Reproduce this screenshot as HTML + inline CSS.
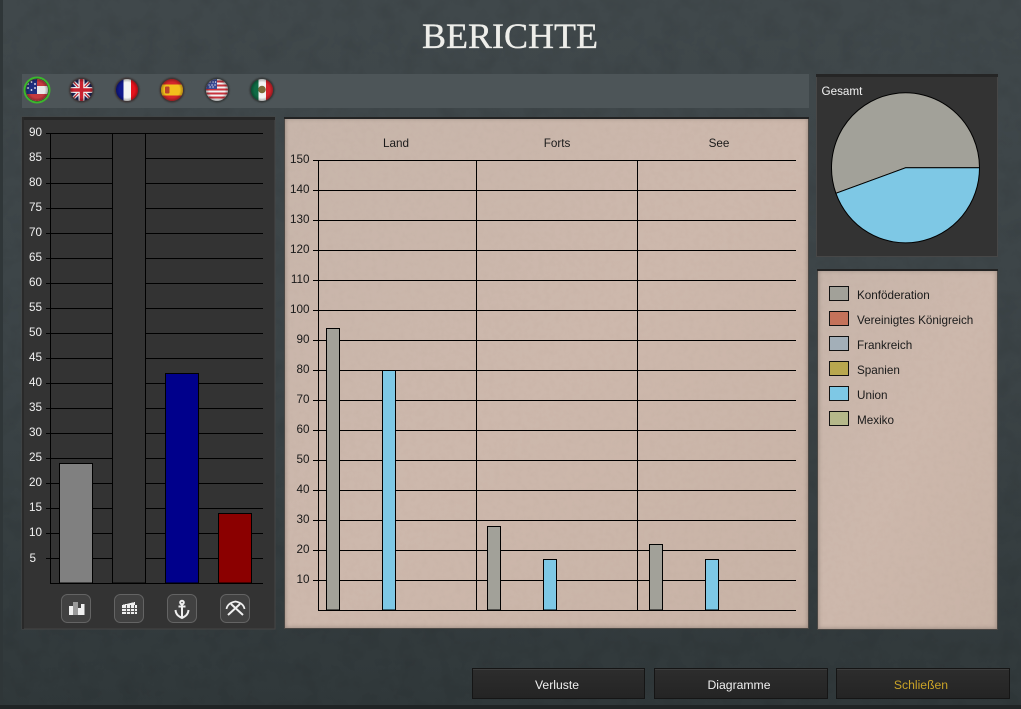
<!DOCTYPE html>
<html><head><meta charset="utf-8"><style>
html,body{margin:0;padding:0;background:#363d40}
body{width:1021px;height:709px;overflow:hidden;position:relative}
svg{position:absolute;left:0;top:0}
text{font-family:"Liberation Sans",sans-serif;font-size:11.7px}
</style></head><body>
<svg width="1021" height="709" viewBox="0 0 1021 709" xmlns="http://www.w3.org/2000/svg" shape-rendering="crispEdges">
<defs>
<linearGradient id="bg" x1="0" y1="0" x2="0" y2="1"><stop offset="0" stop-color="#40484b"/><stop offset=".5" stop-color="#3c4447"/><stop offset="1" stop-color="#30383a"/></linearGradient>
<linearGradient id="paper" x1="0" y1="0" x2="1" y2="1"><stop offset="0" stop-color="#c7b5aa"/><stop offset=".5" stop-color="#cdb8ac"/><stop offset="1" stop-color="#c8b3a6"/></linearGradient>
<linearGradient id="btn" x1="0" y1="0" x2="0" y2="1"><stop offset="0" stop-color="#2d2d2d"/><stop offset="1" stop-color="#242424"/></linearGradient>
<radialGradient id="shade"><stop offset=".7" stop-color="#000" stop-opacity="0"/><stop offset="1" stop-color="#000" stop-opacity=".3"/></radialGradient>
<filter id="noise" x="0" y="0" width="100%" height="100%"><feTurbulence type="fractalNoise" baseFrequency=".05" numOctaves="5" seed="4"/><feColorMatrix values="0 0 0 0 0 0 0 0 0 0 0 0 0 0 0 0 0 0 1.2 -.5"/></filter>
<filter id="grain" x="0" y="0" width="100%" height="100%"><feTurbulence type="fractalNoise" baseFrequency=".18" numOctaves="3" seed="9"/><feColorMatrix values="0 0 0 0 .35 0 0 0 0 .25 0 0 0 0 .2 0 0 0 1.2 -.5"/></filter>
<filter id="soft" x="-10%" y="-10%" width="120%" height="120%"><feGaussianBlur stdDeviation="2"/></filter>
<filter id="glow" x="-30%" y="-30%" width="160%" height="160%"><feGaussianBlur stdDeviation=".8"/></filter>
<clipPath id="c"><circle cx="0" cy="0" r="11"/></clipPath>
<clipPath id="midc"><rect x="284" y="117" width="525" height="512"/></clipPath>
<clipPath id="legc"><rect x="817" y="269" width="181" height="361"/></clipPath>
</defs>
<rect width="1021" height="709" fill="url(#bg)"/>
<rect width="1021" height="709" filter="url(#noise)" opacity=".1"/>
<rect x="0" y="0" width="3" height="709" fill="#2f3638"/>
<rect x="0" y="705" width="1021" height="4" fill="#202425"/>

<text x="510" y="48" text-anchor="middle" style="font-family:'Liberation Serif',serif;font-size:36px" fill="#eeeeea" stroke="#eeeeea" stroke-width=".35" shape-rendering="auto">BERICHTE</text>

<!-- Flag bar -->
<rect x="22" y="74" width="787" height="34" fill="#4d5558"/>
<g shape-rendering="geometricPrecision">
<circle cx="37" cy="90" r="12.500" fill="#2a2a2a" stroke="#3cb72c" stroke-width="2"/>
<g transform="translate(37 90)" clip-path="url(#c)"><rect x="-11" y="-11" width="22" height="22" fill="#e8e8e8"/><rect x="-11" y="-11" width="22" height="7" fill="#c43a3f"/><rect x="-11" y="4" width="22" height="7" fill="#c43a3f"/><rect x="-11" y="-11" width="11" height="15" fill="#1f2f7e"/><circle cx="-5.500" cy="-8" r=".9" fill="#fff"/><circle cx="-2" cy="-6" r=".9" fill="#fff"/><circle cx="-2" cy="-2" r=".9" fill="#fff"/><circle cx="-5.500" cy="0" r=".9" fill="#fff"/><circle cx="-9" cy="-2" r=".9" fill="#fff"/><circle cx="-9" cy="-6" r=".9" fill="#fff"/><circle r="11" fill="url(#shade)"/></g>

<circle cx="81.500" cy="90" r="12.500" fill="#3a3030" filter="url(#glow)"/>
<g transform="translate(81.500 90)" clip-path="url(#c)"><rect x="-11" y="-11" width="22" height="22" fill="#1d2358"/><path d="M-11-11L11 11M11-11L-11 11" stroke="#eee" stroke-width="3.500"/><path d="M-11-11L11 11M11-11L-11 11" stroke="#c8202f" stroke-width="1.200"/><path d="M0-11V11M-11 0H11" stroke="#eee" stroke-width="6"/><path d="M0-11V11M-11 0H11" stroke="#c8202f" stroke-width="3.500"/><circle r="11" fill="url(#shade)"/></g>

<circle cx="127" cy="90" r="12.500" fill="#3a3030" filter="url(#glow)"/>
<g transform="translate(127 90)" clip-path="url(#c)"><rect x="-11" y="-11" width="8" height="22" fill="#10188c"/><rect x="-3.500" y="-11" width="7.500" height="22" fill="#f3f3f3"/><rect x="4" y="-11" width="7" height="22" fill="#e6121c"/><circle r="11" fill="url(#shade)"/></g>

<circle cx="172" cy="90" r="12.500" fill="#3a3030" filter="url(#glow)"/>
<g transform="translate(172 90)" clip-path="url(#c)"><rect x="-11" y="-11" width="22" height="22" fill="#d4272b"/><rect x="-11" y="-5.500" width="22" height="11" fill="#f2c01c"/><rect x="-7" y="-3.500" width="4.500" height="7" rx="1" fill="#b9432c"/><circle r="11" fill="url(#shade)"/></g>

<circle cx="217" cy="90" r="12.500" fill="#303636" filter="url(#glow)"/>
<g transform="translate(217 90)" clip-path="url(#c)"><rect x="-11" y="-11" width="22" height="22" fill="#f2f2f2"/><path d="M-11-8.500H11M-11-4.500H11M-11-.5H11M-11 3.500H11M-11 7.500H11" stroke="#c8323c" stroke-width="2"/><rect x="-11" y="-11" width="11" height="10" fill="#3a4a94"/><path d="M-7-8h.1M-4-8h.1M-1.500-8h.1M-8-5h.1M-5-5h.1M-2-5h.1M-7-3h.1M-4-3h.1" stroke="#fff" stroke-width="1.200" stroke-linecap="round"/><circle r="11" fill="url(#shade)"/></g>

<circle cx="262" cy="90" r="12.500" fill="#303636" filter="url(#glow)"/>
<g transform="translate(262 90)" clip-path="url(#c)"><rect x="-11" y="-11" width="7.500" height="22" fill="#0f6b45"/><rect x="-3.500" y="-11" width="7.500" height="22" fill="#f3f3f3"/><rect x="4" y="-11" width="7" height="22" fill="#d4242c"/><circle cx="0" cy="-.5" r="3.800" fill="#7a6a3a"/><circle r="11" fill="url(#shade)"/></g>
</g>

<!-- Left panel -->
<rect x="22" y="117" width="253" height="512" fill="#333333" stroke="#454545"/>
<rect x="22" y="117" width="253" height="3" fill="#262626"/>
<rect x="22" y="117" width="2" height="512" fill="#292929"/>
<g stroke="#000" stroke-width="1">
<path d="M46 133.500H263M46 158.500H263M46 183.500H263M46 208.500H263M46 233.500H263M46 258.500H263M46 283.500H263M46 308.500H263M46 333.500H263M46 358.500H263M46 383.500H263M46 408.500H263M46 433.500H263M46 458.500H263M46 483.500H263M46 508.500H263M46 533.500H263M46 558.500H263M50.500 133V584M50 583.500H263"/>
<rect x="59.500" y="463.500" width="33" height="119.500" fill="#808080"/>
<rect x="112.500" y="133.500" width="33" height="449.500" fill="#333333"/>
<rect x="165.500" y="373.500" width="33" height="209.500" fill="#00008b"/>
<rect x="218.500" y="513.500" width="33" height="69.500" fill="#8b0000"/>
</g>
<g fill="#f0f0f0" text-anchor="end">
<text x="42" y="136">90</text><text x="42" y="161">85</text><text x="42" y="186">80</text><text x="42" y="211">75</text><text x="42" y="236">70</text><text x="42" y="261">65</text><text x="42" y="286">60</text><text x="42" y="311">55</text><text x="42" y="336">50</text><text x="42" y="361">45</text><text x="42" y="386">40</text><text x="42" y="411">35</text><text x="42" y="436">30</text><text x="42" y="461">25</text><text x="42" y="486">20</text><text x="42" y="511">15</text><text x="42" y="536">10</text><text x="36" y="562">5</text>
</g>
<!-- Icon buttons -->
<g fill="#414141" stroke="#646464" shape-rendering="geometricPrecision">
<rect x="61.500" y="594.500" width="29" height="28" rx="6"/><rect x="114.500" y="594.500" width="29" height="28" rx="6"/><rect x="167.500" y="594.500" width="29" height="28" rx="6"/><rect x="220.500" y="594.500" width="29" height="28" rx="6"/>
</g>
<g fill="#f0f0f0">
<rect x="69" y="606" width="7" height="9"/><rect x="73" y="602" width="5" height="13" fill="#9a9a9a"/><rect x="78" y="608" width="3" height="7"/><rect x="81" y="604" width="3.500" height="11"/>
<rect x="122" y="605" width="15" height="9"/><path d="M122 605L135 602V605Z"/>
</g>
<path d="M122 608.500H137M122 611.500H137M126.500 605V614M130.500 605V614M134.500 605V614" stroke="#555" fill="none"/>
<g fill="none" stroke="#f0f0f0" stroke-width="2" shape-rendering="geometricPrecision">
<circle cx="182" cy="602.500" r="1.800"/><path d="M182 604V618M178.500 606.500H185.500M175.500 610C176 615 179 616.500 182 618C185 616.500 188 615 188.500 610"/>
<path d="M228 615L240 604M243 615L231 604"/>
<path d="M226.500 609Q227.500 603 235.500 601.500Q243.500 603 244.500 609" stroke-width="1.700"/>
</g>

<!-- Middle panel -->
<rect x="284" y="117" width="525" height="512" fill="url(#paper)"/>
<g clip-path="url(#midc)">
<rect x="284" y="117" width="525" height="512" filter="url(#grain)" opacity=".1"/>
<rect x="283" y="116" width="527" height="514" fill="none" stroke="#3e3530" stroke-width="5" filter="url(#soft)" opacity=".35"/>
</g>
<rect x="284.500" y="117.500" width="524" height="511" fill="none" stroke="#4a4744"/>
<rect x="284" y="117" width="525" height="2" fill="#232323"/>
<g stroke="#000">
<path d="M313 160.500H796M313 190.500H796M313 220.500H796M313 250.500H796M313 280.500H796M313 310.500H796M313 340.500H796M313 370.500H796M313 400.500H796M313 430.500H796M313 460.500H796M313 490.500H796M313 520.500H796M313 550.500H796M313 580.500H796M318 610.500H796M318.500 160V611M476.500 160V611M637.500 160V611"/>
<g fill="#a2a199">
<rect x="326.500" y="328.500" width="13" height="281.500"/><rect x="487.500" y="526.500" width="13" height="83.500"/><rect x="649.500" y="544.500" width="13" height="65.500"/>
</g>
<g fill="#7ec8e5">
<rect x="382.500" y="370.500" width="13" height="239.500"/><rect x="543.500" y="559.500" width="13" height="50.500"/><rect x="705.500" y="559.500" width="13" height="50.500"/>
</g>
</g>
<g fill="#1a1a1a" text-anchor="middle">
<text x="396" y="147">Land</text><text x="557" y="147">Forts</text><text x="719" y="147">See</text>
</g>
<g fill="#1a1a1a" text-anchor="end">
<text x="309.500" y="163">150</text><text x="309.500" y="193">140</text><text x="309.500" y="223">130</text><text x="309.500" y="253">120</text><text x="309.500" y="283">110</text><text x="309.500" y="313">100</text><text x="309.500" y="343">90</text><text x="309.500" y="373">80</text><text x="309.500" y="403">70</text><text x="309.500" y="433">60</text><text x="309.500" y="463">50</text><text x="309.500" y="493">40</text><text x="309.500" y="523">30</text><text x="309.500" y="553">20</text><text x="309.500" y="583">10</text>
</g>

<!-- Pie -->
<rect x="816.500" y="74.500" width="181" height="182" fill="#333333" stroke="#474747"/>
<rect x="816" y="74" width="182" height="3" fill="#252525"/>
<text x="821.500" y="95" fill="#f2f2f2">Gesamt</text>
<g stroke="#000" stroke-width="1" shape-rendering="geometricPrecision">
<path d="M905.500 167.800L835.900 193.300A74 75 0 1 1 979.500 167.800Z" fill="#a2a199"/>
<path d="M905.500 167.800H979.500A74 75 0 0 1 835.900 193.300Z" fill="#7ec8e5"/>
</g>

<!-- Legend -->
<rect x="817" y="269" width="181" height="361" fill="url(#paper)"/>
<g clip-path="url(#legc)">
<rect x="817" y="269" width="181" height="361" filter="url(#grain)" opacity=".1"/>
<rect x="816" y="268" width="183" height="363" fill="none" stroke="#3e3530" stroke-width="5" filter="url(#soft)" opacity=".35"/>
</g>
<rect x="817.500" y="269.500" width="180" height="360" fill="none" stroke="#4a4744"/>
<rect x="817" y="269" width="181" height="2" fill="#232323"/>
<g stroke="#111">
<rect x="829.500" y="286.500" width="19" height="14" fill="#a2a199"/>
<rect x="829.500" y="311.500" width="19" height="14" fill="#c4725a"/>
<rect x="829.500" y="336.500" width="19" height="14" fill="#a3afb8"/>
<rect x="829.500" y="361.500" width="19" height="14" fill="#b8a74f"/>
<rect x="829.500" y="386.500" width="19" height="14" fill="#7ec8e5"/>
<rect x="829.500" y="411.500" width="19" height="14" fill="#b5b88a"/>
</g>
<g fill="#1a1a1a">
<text x="857" y="299">Konföderation</text>
<text x="857" y="324">Vereinigtes Königreich</text>
<text x="857" y="349">Frankreich</text>
<text x="857" y="374">Spanien</text>
<text x="857" y="399">Union</text>
<text x="857" y="424">Mexiko</text>
</g>

<!-- Buttons -->
<g fill="url(#btn)" stroke="#151515">
<rect x="472.500" y="668.500" width="172" height="30"/>
<rect x="654.500" y="668.500" width="173" height="30"/>
<rect x="836.500" y="668.500" width="173" height="30"/>
</g>
<path d="M473 669.500H644M655 669.500H827M837 669.500H1009" stroke="#3e3e3e"/>
<g text-anchor="middle">
<text x="557" y="689" fill="#f0f0f0" style="font-size:12.200px">Verluste</text>
<text x="739" y="689" fill="#f0f0f0" style="font-size:12.200px">Diagramme</text>
<text x="921" y="689" fill="#c9a227" style="font-size:12.200px">Schließen</text>
</g>
</svg>
</body></html>
